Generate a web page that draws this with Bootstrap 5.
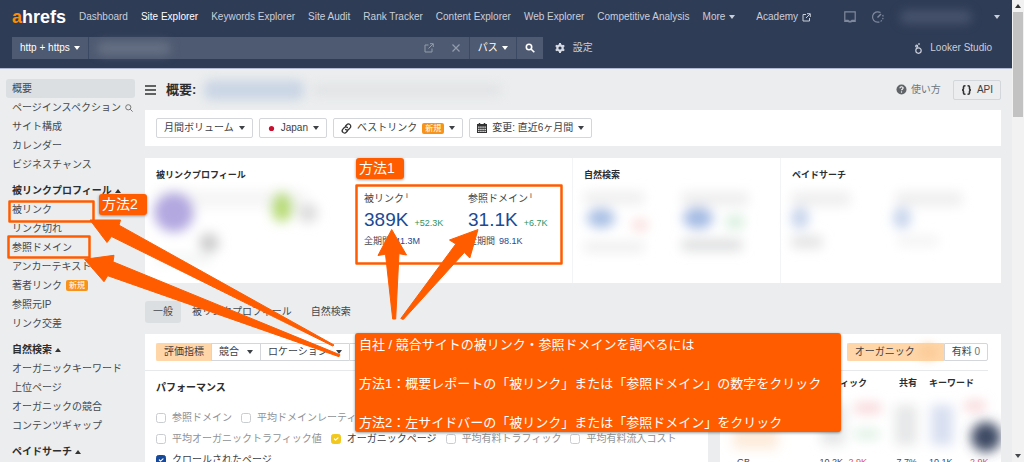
<!DOCTYPE html>
<html lang="ja">
<head>
<meta charset="utf-8">
<meta name="viewport" content="width=device-width, initial-scale=1">
<title>Ahrefs - Site Explorer</title>
<link href="https://cdn.jsdelivr.net/npm/bootstrap@5.3.0/dist/css/bootstrap.min.css" rel="stylesheet">
<style>
:root { --navy:#2f3c56; --field:#4e5a71; --page:#ebedee; --accent:#ff5c00; --peach:#ffd6a8; --blue:#1c4a94; }
body { font-family:"Liberation Sans","Noto Sans CJK JP",sans-serif; font-size:10px; line-height:18px; color:#45484d; background:var(--page); }
a { color:inherit; text-decoration:none; }
svg { flex:none; display:block; overflow:visible; }
.caret, .caret-up { display:inline-block; flex:none; border:3px solid transparent; border-top:4px solid currentColor; border-bottom:0; }
.caret-up { border:3px solid transparent; border-bottom:4px solid #333; border-top:0; }
.shell { height:100vh; }
.topbar { background:var(--navy); color:#c9cfda; border-bottom:1px solid #aeb8cf; height:69px; }
.topbar-menu { height:34px; padding:0 12px; }
.topbar-menu nav { gap:13px; margin-left:13px; }
.brand { font-size:18px; font-weight:bold; color:#fff; width:54px; }
.brand b { color:#ff8c00; }
.search-row { height:28px; padding:0 12px; }
.field-part { background:var(--field); color:#fff; height:22px; border:0; border-right:1px solid #3c4963; padding:0 8px; font-size:10px; }
.url-field { background:var(--field); height:22px; width:381px; border-right:1px solid #3c4963; padding-right:9px; gap:10px; }
.url-field input { background:none; border:0; outline:0; min-width:0; height:22px; }
.smudge { border-radius:8px; filter:blur(5px); }
.smudge-user { width:72px; height:14px; background:#46526b; margin-right:22px; }
.smudge-url { width:74px; height:13px; background:#667084; margin-left:8px; }
.smudge-site { width:100px; height:20px; background:#cbd6e5; }
.smudge-path { width:190px; height:12px; background:#e2e4e6; }
.smudge-count { width:18px; height:14px; background:#fbcb98; }
.sidebar { width:145px; padding:10px 6px 0; }
.side-link { height:19px; line-height:19px; padding:0 6px; border-radius:3px; }
.side-link.active { background:#dcdfe2; }
.side-head { height:19px; line-height:19px; padding:0 6px; margin-top:7px; font-weight:bold; color:#2b2d30; gap:3px; }
.new-tag { background:#f7931a; color:#fff; border-radius:2px; font-size:8px; line-height:11px; padding:0 3px; }
.main-col { padding-right:11px; }
.title-row { height:41px; }
.title-row h1 { font-size:13px; line-height:20px; color:#2b2d30; margin:0 0 0 10px; }
.panel { background:#fff; }
.tool { background:#fff; border:1px solid #d3d6da; border-radius:2px; height:20px; line-height:18px; padding:0 7px; font-size:10px; color:#3d4045; gap:5px; }
.filters { padding:8px 11px; gap:6px; }
.overview { display:grid; grid-template-columns:428fr 208fr 220fr; height:125px; margin-top:12px; }
.overview section { padding:8px 0 0 11px; box-shadow:-1px 0 #f3f4f5; }
.overview section:first-child { box-shadow:none; }
.overview h2, .sub-title { font-size:9px; line-height:18px; font-weight:bold; color:#2b2d30; margin:0; }
.metrics { display:grid; grid-template-columns:208px 104px 104px; padding-top:6px; }
.metric sup { font-size:8px; top:-4px; margin-left:2px; }
.metric-value { font-size:19px; line-height:24px; color:var(--blue); }
.metric-line { gap:6px; }
.metric small { font-size:9px; }
.metric .total { color:var(--blue); }
.up { color:#2f9360; }
.tabs { height:51px; padding-top:6px; }
.tabs a { height:22px; line-height:22px; padding:0 8px; margin-right:3px; }
.tabs a.active { background:#dcdfe2; border-radius:3px; }
.lower { gap:12px; }
.lower-right { width:281px; padding:9px 13px 0; }
.lower-left { padding-top:9px; }
.lower-left .rule-line { padding-left:11px; }
.seg { height:18px; line-height:16px; font-size:10px; border:1px solid #d3d6da; border-right:0; background:#fff; color:#3d4045; padding:0 7px; }
.seg.active { background:var(--peach); border-color:var(--peach); }
.seg:first-child { border-radius:2px 0 0 2px; }
.seg:last-child { border-right:1px solid #d3d6da; border-radius:0 2px 2px 0; }
.rule-line { border-bottom:1px solid #e7e9eb; padding-bottom:9px; }
.checks { padding:0 11px; }
.checks .sub-title { font-size:10px; padding:8px 0 10px; }
.checks label { gap:6px; color:#8f9296; white-space:nowrap; }
.checks label.on { color:#3d4045; }
.checks input { width:10px; height:10px; margin:0; font-size:10px; border:1px solid #c9ccd0; border-radius:2px; }
.check-row { height:21px; gap:9px; }
.form-check-input.gold:checked { background-color:#f3c81c; border-color:#f3c81c; }
.form-check-input.navy:checked { background-color:#16499a; border-color:#16499a; }
.geo { font-size:9px; width:100%; table-layout:fixed; white-space:nowrap; }
.geo th { color:#2b2d30; padding:2px 0; line-height:20px; }
.geo td { padding:0; line-height:14px; }
.geo .keys { padding-left:12px; }
.geo td.keys { color:var(--blue); }
.geo .down { color:#d8505c; }
.w-country { width:77px; } .w-traffic { width:33px; } .w-change { width:24px; } .w-share { width:50px; }
.scroller { width:12px; background:#f2f2f2; }
.scroller-thumb { height:105px; width:10px; background:#c2c2c2; }
.notes { position:absolute; inset:0; pointer-events:none; }
.notes > * { position:absolute; }
.note-tag { background:var(--accent); color:#fff; border-radius:3px; box-shadow:0 1px 3px #0006; font-size:14px; line-height:21px; width:48px; padding-left:3px; }
.tag-one { left:356px; top:158px; }
.tag-two { left:99px; top:194px; }
.note-box { background:var(--accent); color:#fff; border-radius:3px; box-shadow:0 1px 3px #0006; font-size:13px; line-height:19px; width:486px; height:99px; padding:2px 4px; left:355px; top:333px; }
.note-box p { margin:0 0 20px; white-space:nowrap; }
</style>
</head>
<body>
<div class="shell d-flex overflow-hidden position-relative">
<div class="flex-grow-1 d-flex flex-column overflow-hidden">
  <header class="topbar flex-shrink-0">
    <div class="topbar-menu d-flex align-items-center">
      <a href="#" class="brand"><b>a</b>hrefs</a>
      <nav class="d-flex align-items-center flex-grow-1 text-nowrap">
        <a href="#">Dashboard</a><a href="#" class="text-white">Site Explorer</a><a href="#">Keywords Explorer</a><a href="#">Site Audit</a><a href="#">Rank Tracker</a><a href="#">Content Explorer</a><a href="#">Web Explorer</a><a href="#">Competitive Analysis</a>
        <a href="#" class="d-flex align-items-center gap-1">More <span class="caret"></span></a>
        <a href="#" class="d-flex align-items-center gap-1 ms-2">Academy
          <svg width="9" height="9" viewBox="0 0 9 9" fill="none" stroke="currentColor"><path d="M4 1.500H1v6.500h6.500V5M5 .700h3.300V4M8 1 4 5"/></svg></a>
      </nav>
      <svg width="12" height="12" viewBox="0 0 12 12" fill="none" stroke="#7f899d" stroke-width="1.200"><path d="M.8.800h10.400v9.600H.8z"/><path d="M1 9.500h3l1 1.200h2l1-1.200h3" stroke-width="1.600"/></svg>
      <svg class="mx-3" width="12" height="12" viewBox="0 0 12 12" fill="none" stroke="#7f899d" stroke-width="1.200"><path d="M8.500 1.600A5.200 5.200 0 1 0 6 11.200"/><path d="M6 11.200A5.200 5.200 0 0 0 10.600 3.800" stroke-dasharray="1.500 1.300"/><path d="M5.500 6.500 9 3" stroke-width="1.500"/></svg>
      <span class="smudge smudge-user"></span>
      <span class="caret"></span>
    </div>
    <div class="search-row d-flex align-items-center">
      <button class="field-part d-flex align-items-center gap-1">http + https <span class="caret"></span></button>
      <div class="url-field d-flex align-items-center">
        <span class="smudge smudge-url"></span>
        <input type="text" class="flex-grow-1" aria-label="URL">
        <svg width="10" height="10" viewBox="0 0 10 10" fill="none" stroke="#939cac"><path d="M4.500 2H1v7h7V5.500M6 .700h3.300V4M9 1 4.500 5.500"/></svg>
        <svg class="ms-2" width="8" height="8" viewBox="0 0 8 8" stroke="#939cac" stroke-width="1.200"><path d="m.5.500 7 7m0-7-7 7"/></svg>
      </div>
      <button class="field-part d-flex align-items-center gap-1">パス <span class="caret"></span></button>
      <button class="field-part border-0" aria-label="検索"><svg width="10" height="10" viewBox="0 0 10 10" fill="none" stroke="#fff" stroke-width="1.600"><circle cx="4" cy="4" r="2.700"/><path d="m6 6 3.300 3.300"/></svg></button>
      <a href="#" class="d-flex align-items-center ms-2 gap-2 flex-grow-1">
        <svg class="ms-1" width="10" height="10" viewBox="0 0 10 10"><circle cx="5" cy="5" r="2.700" fill="none" stroke="#d5dae4" stroke-width="2.200"/><path d="M5 0v2M5 8v2M.7 2.500l1.700 1M7.600 6.500l1.700 1M.7 7.500l1.700-1M7.600 3.500l1.700-1" stroke="#d5dae4" stroke-width="2"/></svg>設定</a>
      <a href="#" class="d-flex align-items-center gap-1 me-2">
        <svg class="me-1" width="7" height="11" viewBox="0 0 7 11" fill="none" stroke="#c9cfda" stroke-width="1.200"><circle cx="3.500" cy="7.600" r="2.700"/><circle cx="1.700" cy="3.200" r="1"/><path d="M3.200 1h1.600" stroke-width="1.300"/></svg>Looker Studio</a>
    </div>
  </header>

  <div class="d-flex flex-grow-1 overflow-hidden">
    <aside class="sidebar flex-shrink-0 d-flex flex-column text-nowrap">
      <a href="#" class="side-link active me-1">概要</a>
      <a href="#" class="side-link d-flex align-items-center gap-1 pe-0">ページインスペクション <svg width="8" height="8" viewBox="0 0 8 8" fill="none" stroke="#777"><circle cx="3.300" cy="3.300" r="2.600"/><path d="m5.300 5.300 2.300 2.300"/></svg></a>
      <a href="#" class="side-link">サイト構成</a>
      <a href="#" class="side-link">カレンダー</a>
      <a href="#" class="side-link">ビジネスチャンス</a>
      <div class="side-head d-flex align-items-center">被リンクプロフィール<span class="caret-up"></span></div>
      <a href="#" class="side-link">被リンク</a>
      <a href="#" class="side-link">リンク切れ</a>
      <a href="#" class="side-link">参照ドメイン</a>
      <a href="#" class="side-link">アンカーテキスト</a>
      <a href="#" class="side-link d-flex align-items-center gap-1">著者リンク <span class="new-tag">新規</span></a>
      <a href="#" class="side-link">参照元IP</a>
      <a href="#" class="side-link">リンク交差</a>
      <div class="side-head d-flex align-items-center">自然検索<span class="caret-up"></span></div>
      <a href="#" class="side-link">オーガニックキーワード</a>
      <a href="#" class="side-link">上位ページ</a>
      <a href="#" class="side-link">オーガニックの競合</a>
      <a href="#" class="side-link">コンテンツギャップ</a>
      <div class="side-head d-flex align-items-center">ペイドサーチ<span class="caret-up"></span></div>
    </aside>

    <main class="main-col flex-grow-1 d-flex flex-column overflow-hidden">
      <div class="title-row d-flex align-items-center flex-shrink-0">
        <svg width="11" height="10" viewBox="0 0 11 10" stroke="#333" stroke-width="1.500"><path d="M0 1h11M0 5h11M0 9h11"/></svg>
        <h1 class="fw-bold">概要:</h1>
        <span class="smudge smudge-site ms-2"></span>
        <span class="smudge smudge-path ms-2"></span>
        <a href="#" class="d-flex align-items-center gap-1 ms-auto me-1 text-secondary"><svg width="11" height="11" viewBox="0 0 11 11"><circle cx="5.500" cy="5.500" r="5" fill="#606367"/><path d="M3.900 4.300q0-1.600 1.600-1.600t1.600 1.400q0 .8-1 1.300-.6.300-.6.900" fill="none" stroke="#fff" stroke-width="1.100"/><circle cx="5.500" cy="8" r=".7" fill="#fff"/></svg>使い方</a>
        <button class="tool bg-transparent d-flex align-items-center ms-2"><svg width="11" height="10" viewBox="0 0 11 10" fill="none" stroke="#333" stroke-width="1.600"><path d="M4.500.800H3.800Q2.500.800 2.500 2v1.500Q2.500 5 1 5q1.500 0 1.500 1.500V8q0 1.200 1.300 1.200h.7M6.500.800h.7Q8.500.800 8.500 2v1.500Q8.500 5 10 5 8.500 5 8.500 6.500V8q0 1.200-1.300 1.200h-.7"/></svg>API</button>
      </div>

      <div class="panel filters d-flex flex-shrink-0 text-nowrap">
        <button class="tool d-flex align-items-center">月間ボリューム <span class="caret"></span></button>
        <button class="tool d-flex align-items-center"><svg width="9" height="9" viewBox="0 0 9 9"><circle cx="4.500" cy="4.500" r="2.600" fill="#c8102e"/></svg> Japan <span class="caret"></span></button>
        <button class="tool d-flex align-items-center"><svg width="11" height="11" viewBox="0 0 11 11" fill="none" stroke="#333" stroke-width="1.300" stroke-linecap="round"><path d="m4.600 3 1.200-1.300a2.200 2.200 0 0 1 3.300 3.200L7.600 6.500a2.100 2.100 0 0 1-3 0M6.400 8 5.200 9.300A2.200 2.200 0 0 1 1.900 6.100l1.500-1.600a2.100 2.100 0 0 1 3 0"/></svg>ベストリンク <span class="new-tag">新規</span> <span class="caret"></span></button>
        <button class="tool d-flex align-items-center"><svg width="10" height="10" viewBox="0 0 10 10"><path d="M0 1h10v9H0z" fill="#333"/><path d="M2.500 0v2M7.500 0v2" stroke="#333" stroke-width="1.500"/><path d="M1.200 4.200h7.600M1.200 6.300h7.600M1.200 8.400h7.600" stroke="#fff" stroke-width="1.200" stroke-dasharray="1.300 .8"/></svg>変更: 直近6ヶ月間 <span class="caret"></span></button>
      </div>

      <div class="panel overview flex-shrink-0">
        <section>
          <h2>被リンクプロフィール</h2>
          <div class="metrics">
            <svg width="190" height="76" viewBox="0 0 190 76"><defs><filter id="soft" x="-50%" y="-50%" width="200%" height="200%"><feGaussianBlur stdDeviation="6"/></filter></defs><g filter="url(#soft)"><path d="M0 0h150v18H0z" fill="#f6f6f6"/><circle cx="18" cy="22" r="20" fill="#b3a8e0"/><ellipse cx="126" cy="17" rx="11" ry="15" fill="#b9dc78"/><circle cx="152" cy="23" r="10" fill="#dcdcdc"/><circle cx="53" cy="53" r="10" fill="#ccc"/><path d="M0 64h55v10H0z" fill="#f3f4f4"/></g></svg>
            <div class="metric">
              <div>被リンク<sup>i</sup></div>
              <div class="metric-line d-flex align-items-baseline"><a href="#" class="metric-value">389K</a><small class="up">+52.3K</small></div>
              <div class="d-flex gap-1"><small>全期間</small><small class="total">41.3M</small></div>
            </div>
            <div class="metric">
              <div>参照ドメイン<sup>i</sup></div>
              <div class="metric-line d-flex align-items-baseline"><a href="#" class="metric-value">31.1K</a><small class="up">+6.7K</small></div>
              <div class="d-flex gap-1"><small>全期間</small><small class="total">98.1K</small></div>
            </div>
          </div>
        </section>
        <section>
          <h2>自然検索</h2>
          <svg class="mt-2" width="186" height="72" viewBox="0 0 186 72"><g filter="url(#soft)"><path d="M0 0h60v12H0zM98 0h66v14H98zM0 50h60v10H0z" fill="#eee"/><ellipse cx="17" cy="26" rx="14" ry="10" fill="#a9c0e4"/><ellipse cx="56" cy="33" rx="8" ry="6" fill="#f9dad8"/><ellipse cx="114" cy="26" rx="15" ry="11" fill="#a5bce4"/><ellipse cx="151" cy="30" rx="10" ry="7" fill="#d6eedd"/><path d="M98 47h60v12H98z" fill="#dedfe0"/></g></svg>
        </section>
        <section>
          <h2>ペイドサーチ</h2>
          <svg class="mt-2" width="186" height="72" viewBox="0 0 186 72"><g filter="url(#soft)"><path d="M0 0h58v14H0zM104 0h66v14h-66z" fill="#eee"/><ellipse cx="8" cy="26" rx="9" ry="11" fill="#c6d4ec"/><ellipse cx="110" cy="26" rx="9" ry="11" fill="#c6d4ec"/><path d="M0 44h30v12H0z" fill="#e2e2e3"/><path d="M106 44h40v10h-40z" fill="#f3f3f3"/></g></svg>
        </section>
      </div>

      <nav class="tabs d-flex align-items-center flex-shrink-0 text-nowrap">
        <a href="#" class="active">一般</a><a href="#">被リンクプロフィール</a><a href="#">自然検索</a>
      </nav>

      <div class="lower d-flex flex-grow-1">
        <div class="panel lower-left flex-grow-1 overflow-hidden">
          <div class="rule-line d-flex text-nowrap">
            <button class="seg active">評価指標</button><button class="seg d-flex align-items-center gap-2">競合 <span class="caret"></span></button><button class="seg d-flex align-items-center gap-2">ロケーション <span class="caret"></span></button><button class="seg">期間</button>
          </div>
          <div class="checks">
            <h2 class="sub-title">パフォーマンス</h2>
            <div class="check-row d-flex align-items-center">
              <label class="d-flex align-items-center"><input class="form-check-input" type="checkbox">参照ドメイン</label>
              <label class="d-flex align-items-center"><input class="form-check-input" type="checkbox">平均ドメインレーティング</label>
            </div>
            <div class="check-row d-flex align-items-center">
              <label class="d-flex align-items-center"><input class="form-check-input" type="checkbox">平均オーガニックトラフィック値</label>
              <label class="d-flex align-items-center on"><input class="form-check-input gold" type="checkbox" checked>オーガニックページ</label>
              <label class="d-flex align-items-center"><input class="form-check-input" type="checkbox">平均有料トラフィック</label>
              <label class="d-flex align-items-center"><input class="form-check-input" type="checkbox">平均有料流入コスト</label>
            </div>
            <div class="check-row d-flex align-items-center">
              <label class="d-flex align-items-center on"><input class="form-check-input navy" type="checkbox" checked>クロールされたページ</label>
            </div>
          </div>
        </div>
        <div class="panel lower-right flex-shrink-0 overflow-hidden">
          <div class="rule-line d-flex justify-content-end">
            <button class="seg active d-flex align-items-center gap-1">オーガニック<span class="smudge smudge-count"></span></button><button class="seg">有料 <span class="text-secondary">0</span></button>
          </div>
          <table class="geo">
            <colgroup><col class="w-country"><col class="w-traffic"><col class="w-change"><col class="w-share"><col class="w-share"><col></colgroup>
            <thead><tr><th>国</th><th class="text-end" colspan="2">トラフィック</th><th class="text-end">共有</th><th class="keys" colspan="2">キーワード</th></tr></thead>
            <tbody>
              <tr><td colspan="6"><svg width="255" height="60" viewBox="0 0 255 60"><g filter="url(#soft)"><path d="M0 26h45v28H0z" fill="#fdecdc"/><path d="M88 10h24v40H88zM162 10h22v40h-22z" fill="#e6e7e8"/><path d="M122 8h26v10h-26zM232 6h20v10h-20z" fill="#f8d4d7"/><path d="M122 34h24v10h-24z" fill="#def1e4"/><path d="M198 10h22v40h-22z" fill="#d8dff0"/></g><circle cx="253" cy="42" r="15" fill="#3c4963" filter="url(#soft)"/></svg></td></tr>
              <tr><td class="ps-1">GB</td><td class="text-end">10.2K</td><td class="down text-end">-2.9K</td><td class="text-end">7.7%</td><td class="keys">10.1K</td><td class="down text-end">-2.9K</td></tr>
            </tbody>
          </table>
        </div>
      </div>
    </main>
  </div>
</div>
<div class="scroller flex-shrink-0 d-flex flex-column align-items-center" aria-hidden="true">
  <span class="caret-up my-1"></span><div class="scroller-thumb"></div><span class="caret mt-auto mb-1"></span>
</div>

<div class="notes">
  <svg width="1024" height="462" viewBox="0 0 1024 462" fill="#ff5c00" stroke-linejoin="round">
    <g fill="none" stroke="#ff5c00" stroke-width="2.500"><path d="M356.500 185.500h205v78h-205zM9.500 201.500h84v20h-84zM8.500 236.500h81v21h-81z" stroke-width="2.500"/></g>
    <g stroke="#ff5c00"><path d="M391.700 229.500 378 255.500l7.500-1.300 7.200 64.800h3L399 253.700l7.500 1.300z"/>
    <path d="M478 229.500 449.500 240l6.300 4-55 74.500 2.500 1 61-67 5.500 5.500z"/>
    <path d="M90 220h30.500l-1.500 5.200 215 119.800-1.300 1L111.500 236.500l-4.500 6z"/>
    <path d="M84.500 259.300l29.500-4-1 6.500 227 93-1 1.900-231.300-81-3.700 6z"/></g>
  </svg>
  <div class="note-tag tag-one">方法1</div>
  <div class="note-tag tag-two">方法2</div>
  <div class="note-box"><p>自社 / 競合サイトの被リンク・参照ドメインを調べるには</p><p>方法1：概要レポートの「被リンク」または「参照ドメイン」の数字をクリック</p><p>方法2：左サイドバーの「被リンク」または「参照ドメイン」をクリック</p></div>
</div>
</div>
<script src="https://cdn.jsdelivr.net/npm/bootstrap@5.3.0/dist/js/bootstrap.bundle.min.js"></script>
</body>
</html>
